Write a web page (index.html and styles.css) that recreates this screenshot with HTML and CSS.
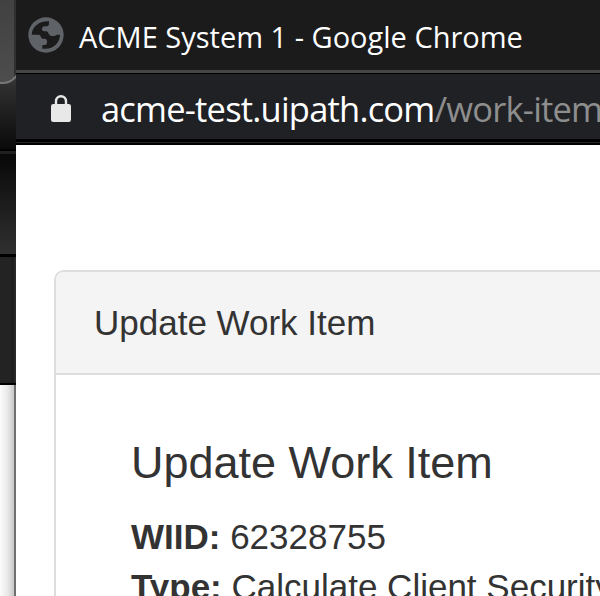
FILE: index.html
```html
<!DOCTYPE html>
<html lang="en">
<head>
<meta charset="utf-8">
<title>ACME System 1</title>
<link rel="stylesheet" href="styles.css">
</head>
<body>
<div class="desktop">
  <aside class="behind">
    <div class="behind-tab"></div>
    <div class="behind-toolbar"></div>
    <div class="behind-band"></div>
    <div class="behind-bar"></div>
    <div class="behind-page"></div>
  </aside>
  <main class="window">
    <header class="titlebar">
      <svg class="globe" viewBox="0 0 108 108">
        <circle cx="54" cy="54" r="53" fill="#5f6368"/>
        <path fill="#1b1b1b" d="M11 53C12 31 31 12 63 13V19Q63 28 56 28H49Q42 29 42 35V38Q43 43 50 43H55Q61 44 62 50Q65 57 72 57Q82 58 87 53H96C96 76 77 95 53 95H43V84H51Q57 83 57 77V72Q57 66 51 65H44Q38 64 38 58Q37 53 32 53Z"/>
      </svg>
      <span class="title">ACME System 1 - Google Chrome</span>
    </header>
    <div class="address">
      <svg class="lock" viewBox="0 0 20 27">
        <rect y="9" width="20" height="18" rx="2.3" fill="#e8e8e8"/>
        <path d="M5 10V6.2a5 5 0 0 1 10 0V10" fill="none" stroke="#e8e8e8" stroke-width="2.4"/>
      </svg>
      <span class="url">acme-test.uipath.com<span class="path">/work-items</span></span>
    </div>
    <div class="edge"></div>
    <section class="page">
      <div class="panel">
        <div class="panel-heading">Update Work Item</div>
        <div class="panel-body">
          <h1>Update Work Item</h1>
          <p><b>WIID:</b> 62328755</p>
          <p><b>Type:</b> Calculate Client Security Hash</p>
        </div>
      </div>
    </section>
  </main>
</div>
</body>
</html>
```
FILE: styles.css
```css
* { box-sizing: border-box; }
body { margin: 0; overflow: hidden; background: #fff; }
.desktop { display: flex; width: 600px; height: 596px; overflow: hidden; }

.behind { flex: none; width: 16px; height: 596px; background: #333; overflow: hidden; }
.behind-tab { width: 24px; height: 84px; margin-left: -4px; border: 2px solid #777; border-top: 0; border-radius: 0 0 17px 0; background: linear-gradient(90deg, transparent 16px, #303030 16px), linear-gradient(#414141, #4d4d4d); }
.behind-toolbar { height: 70px; background: linear-gradient(#303030, #0a0a0a 65px, #000 65px, #000 67px, #202020 67px); }
.behind-band { height: 103px; border-bottom: 3px solid #000; background: linear-gradient(#080808, #303030); }
.behind-bar { height: 128px; border-bottom: 2px solid #000; background: linear-gradient(90deg, #232323 10px, #1b1b1b 14px, #292929 14px); }
.behind-page { height: 211px; background: linear-gradient(90deg, #fcfcfc, #e7e7e7 8px, #c8c8c8 14px, #707070 14px); }

.window { flex: none; width: 584px; height: 596px; overflow: hidden; background: #fff; }
.titlebar { display: flex; align-items: center; height: 74px; padding: 0 0 1px 12px; background: linear-gradient(#1b1b1b 70px, #454545 70px, #454545 73px, #000 73px); }
.globe { flex: none; width: 36px; height: 36px; margin-bottom: 3px; }
.title { margin-left: 15px; padding-top: 1px; color: #fff; font: 29px/40px "Open Sans", sans-serif; white-space: nowrap; }
.address { display: flex; align-items: center; height: 65px; padding-left: 35px; background: #202124; }
.lock { flex: none; width: 20px; height: 27px; margin-top: 4px; }
.url { margin-left: 30px; padding-top: 4px; color: #fff; font: 34.5px/48px "Open Sans", sans-serif; letter-spacing: -.8px; white-space: nowrap; }
.path { color: #8e8e8e; }
.edge { height: 6px; background: linear-gradient(#000 3px, #242424 3px, #242424 4px, #000 4px); }

.page { padding: 125px 0 0 38px; color: #333; font: 35px/50px "Liberation Sans", Arial, sans-serif; }
.panel { width: 620px; height: 500px; border: 2px solid #ddd; border-radius: 10px; background: #fff; white-space: nowrap; overflow: hidden; }
.panel-heading { height: 103px; padding: 26px 38px; border-bottom: 2px solid #ddd; background: #f4f4f4; }
.panel-body { padding: 63px 75px 0; }
h1 { margin: 0 0 24px; font-size: 45px; line-height: 50px; font-weight: 400; }
p { margin: 0; }
```
